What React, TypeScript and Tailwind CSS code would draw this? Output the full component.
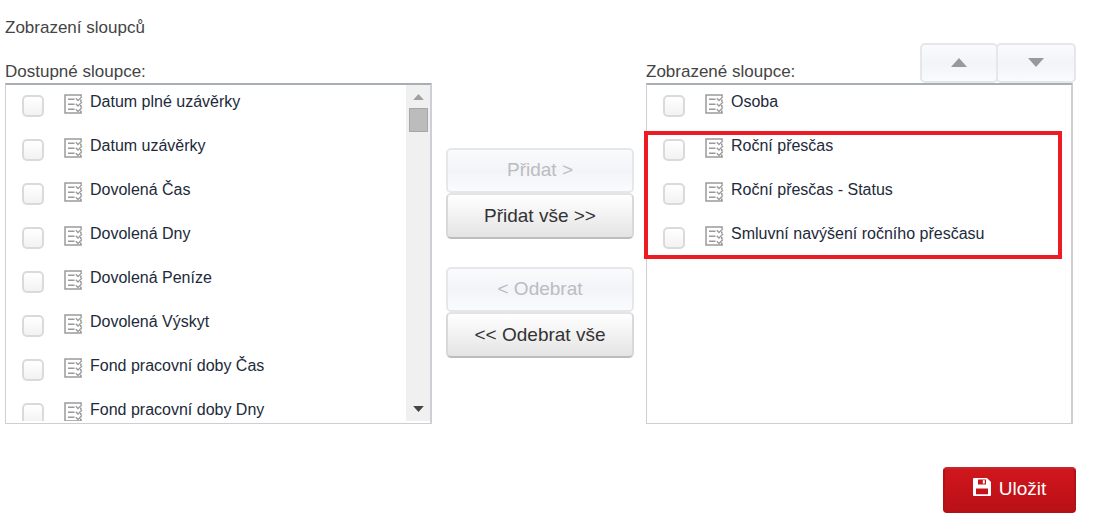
import { useState } from 'react';

const availableColumns = [
    'Datum plné uzávěrky',
    'Datum uzávěrky',
    'Dovolená Čas',
    'Dovolená Dny',
    'Dovolená Peníze',
    'Dovolená Výskyt',
    'Fond pracovní doby Čas',
    'Fond pracovní doby Dny',
];

const shownColumns = ['Osoba'];
const newColumns = ['Roční přesčas', 'Roční přesčas - Status', 'Smluvní navýšení ročního přesčasu'];

const ColumnIcon = () => (
    <svg width="19" height="20" viewBox="0 0 19 20" fill="none" stroke="#9a9a9a" className="mt-0.5 ml-5 shrink-0" aria-hidden="true">
        <path d="M17.8 1H1v18h16.8" strokeWidth="1.5" />
        <path d="M4 5.3h6.5M4 10.3h6.5M4 15.3h6.5" strokeWidth="1.5" />
        <path d="M11.8 4.2l2.2 2.3L18 2.6M11.8 9.7l2.2 2.3L18 8M11.8 15.2l2.2 2.3L18 13.5" strokeWidth="1.3" />
        <path d="M16.8 1v1.5M16.8 5.5v2.3M16.8 11v2.3M16.8 16.5V19" strokeWidth="1.6" />
    </svg>
);

const ColumnRow = ({ name }: { name: string }) => {
    const [checked, setChecked] = useState(false);

    return (
        <li className="h-11 pt-[7px] pl-4">
            <label className="flex items-start">
                <input
                    type="checkbox"
                    checked={checked}
                    onChange={() => setChecked(!checked)}
                    className="mt-[3px] w-[22px] h-[22px] shrink-0 appearance-none rounded-[5px] border-2 border-[#dadada] bg-gradient-to-b from-white to-[#f2f2f2] checked:bg-gray-400"
                />
                <ColumnIcon />
                <span className="ml-[7px] text-[16px] leading-5 whitespace-nowrap text-[#222a3a]">{name}</span>
            </label>
        </li>
    );
};

const Triangle = ({ down = false, className }: { down?: boolean; className: string }) => (
    <svg viewBox="0 0 16 9" className={className} fill="currentColor" aria-hidden="true">
        <path d={down ? 'M0 0h16L8 9z' : 'M0 9h16L8 0z'} />
    </svg>
);

const disabledStyle = 'border-2 border-[#e6e7eb] bg-gradient-to-b from-[#fafbfc] via-[#f3f4f8] to-[#fafbfd]';

const TransferButton = ({ children, disabled = false }: { children: string; disabled?: boolean }) => (
    <button
        type="button"
        disabled={disabled}
        className={`w-full rounded-[5px] text-[19px] leading-6 ${
            disabled
                ? `h-[45px] pb-0.5 ${disabledStyle} text-[#bbbcc2]`
                : 'h-[46px] border-2 border-[#d9d9db] border-t-[#e4e4e6] border-b-[#bdbdbf] bg-gradient-to-b from-white to-[#e4e4e4] text-[#333]'
        }`}
    >
        {children}
    </button>
);

const App = () => {
    return (
        <main className="bg-white pt-4 pl-[5px] pr-[22px] font-['Liberation_Sans',Arial,sans-serif] text-[#444]">
            <h1 className="text-[17px] leading-6">Zobrazení sloupců</h1>

            <div className="mt-[3px] flex items-start">
                <section className="min-w-0 flex-1">
                    <div className="flex h-10 items-end">
                        <h2 className="text-[17px] leading-[22px]">Dostupné sloupce:</h2>
                    </div>
                    <div className="flex h-[341px] border border-t-2 border-r-2 border-[#cdced6] border-t-[#a9adb6] pb-0.5">
                        <ul className="min-w-0 flex-1 overflow-hidden">
                            {availableColumns.map((name) => (
                                <ColumnRow key={name} name={name} />
                            ))}
                        </ul>
                        <div className="flex w-6 flex-col items-center bg-[#f0f0f0]">
                            <button type="button" aria-label="Nahoru" className="flex h-[23px] w-full items-center justify-center text-[#a0a0a0]">
                                <Triangle className="w-[11px] h-[6px]" />
                            </button>
                            <div className="h-6 w-[19px] border border-[#a6a6a6] bg-[#bcbcbc]" />
                            <button type="button" aria-label="Dolů" className="mt-auto flex h-6 w-full items-center justify-center text-[#444]">
                                <Triangle down className="w-[11px] h-[6px]" />
                            </button>
                        </div>
                    </div>
                </section>

                <div className="mt-[105px] ml-[14px] mr-3 w-[188px] shrink-0">
                    <TransferButton disabled>Přidat &gt;</TransferButton>
                    <TransferButton>Přidat vše &gt;&gt;</TransferButton>
                    <div className="h-7" />
                    <TransferButton disabled>&lt; Odebrat</TransferButton>
                    <TransferButton>&lt;&lt; Odebrat vše</TransferButton>
                </div>

                <section className="min-w-0 flex-1">
                    <div className="-mr-[3px] flex h-10 items-end justify-between">
                        <h2 className="text-[17px] leading-[22px]">Zobrazené sloupce:</h2>
                        <div className="flex">
                            <button type="button" disabled aria-label="Posunout nahoru" className={`flex h-10 w-[78px] items-center justify-center rounded-[5px] pb-0.5 text-[#999] ${disabledStyle}`}>
                                <Triangle className="w-4 h-[9px]" />
                            </button>
                            <button type="button" disabled aria-label="Posunout dolů" className={`-ml-0.5 flex h-10 w-20 items-center justify-center rounded-[5px] pb-0.5 text-[#999] ${disabledStyle}`}>
                                <Triangle down className="w-4 h-[9px]" />
                            </button>
                        </div>
                    </div>
                    <div className="h-[341px] border border-t-2 border-r-2 border-[#cdced6] border-t-[#a9adb6]">
                        <ul>
                            {shownColumns.map((name) => (
                                <ColumnRow key={name} name={name} />
                            ))}
                        </ul>
                        <div className="relative">
                            <ul>
                                {newColumns.map((name) => (
                                    <ColumnRow key={name} name={name} />
                                ))}
                            </ul>
                            <div className="pointer-events-none absolute inset-y-0.5 -left-[3px] right-[9px] border-4 border-[#ed1c24]" />
                        </div>
                    </div>
                </section>
            </div>

            <div className="-mr-[3px] mt-[43px] flex justify-end">
                <button
                    type="button"
                    className="flex h-[46px] w-[133px] items-center justify-center gap-2 rounded-[4px] border-2 border-[#b01217] border-t-[#c0282d] bg-gradient-to-b from-[#d1161d] to-[#b91016] pb-0.5 text-[19px] leading-6 text-white"
                >
                    <svg width="18" height="18" viewBox="0 0 18 18" fill="currentColor" aria-hidden="true" className="-mt-1">
                        <path
                            fillRule="evenodd"
                            d="M1 0h13l4 4v13a1 1 0 0 1-1 1H1a1 1 0 0 1-1-1V1a1 1 0 0 1 1-1zM5 1.6v5h8v-5zM3 10.6v5.6h12v-5.6z"
                        />
                        <path d="M9.8 2.2h2V5.6h-2z" />
                    </svg>
                    Uložit
                </button>
            </div>
        </main>
    );
};

export default App;
